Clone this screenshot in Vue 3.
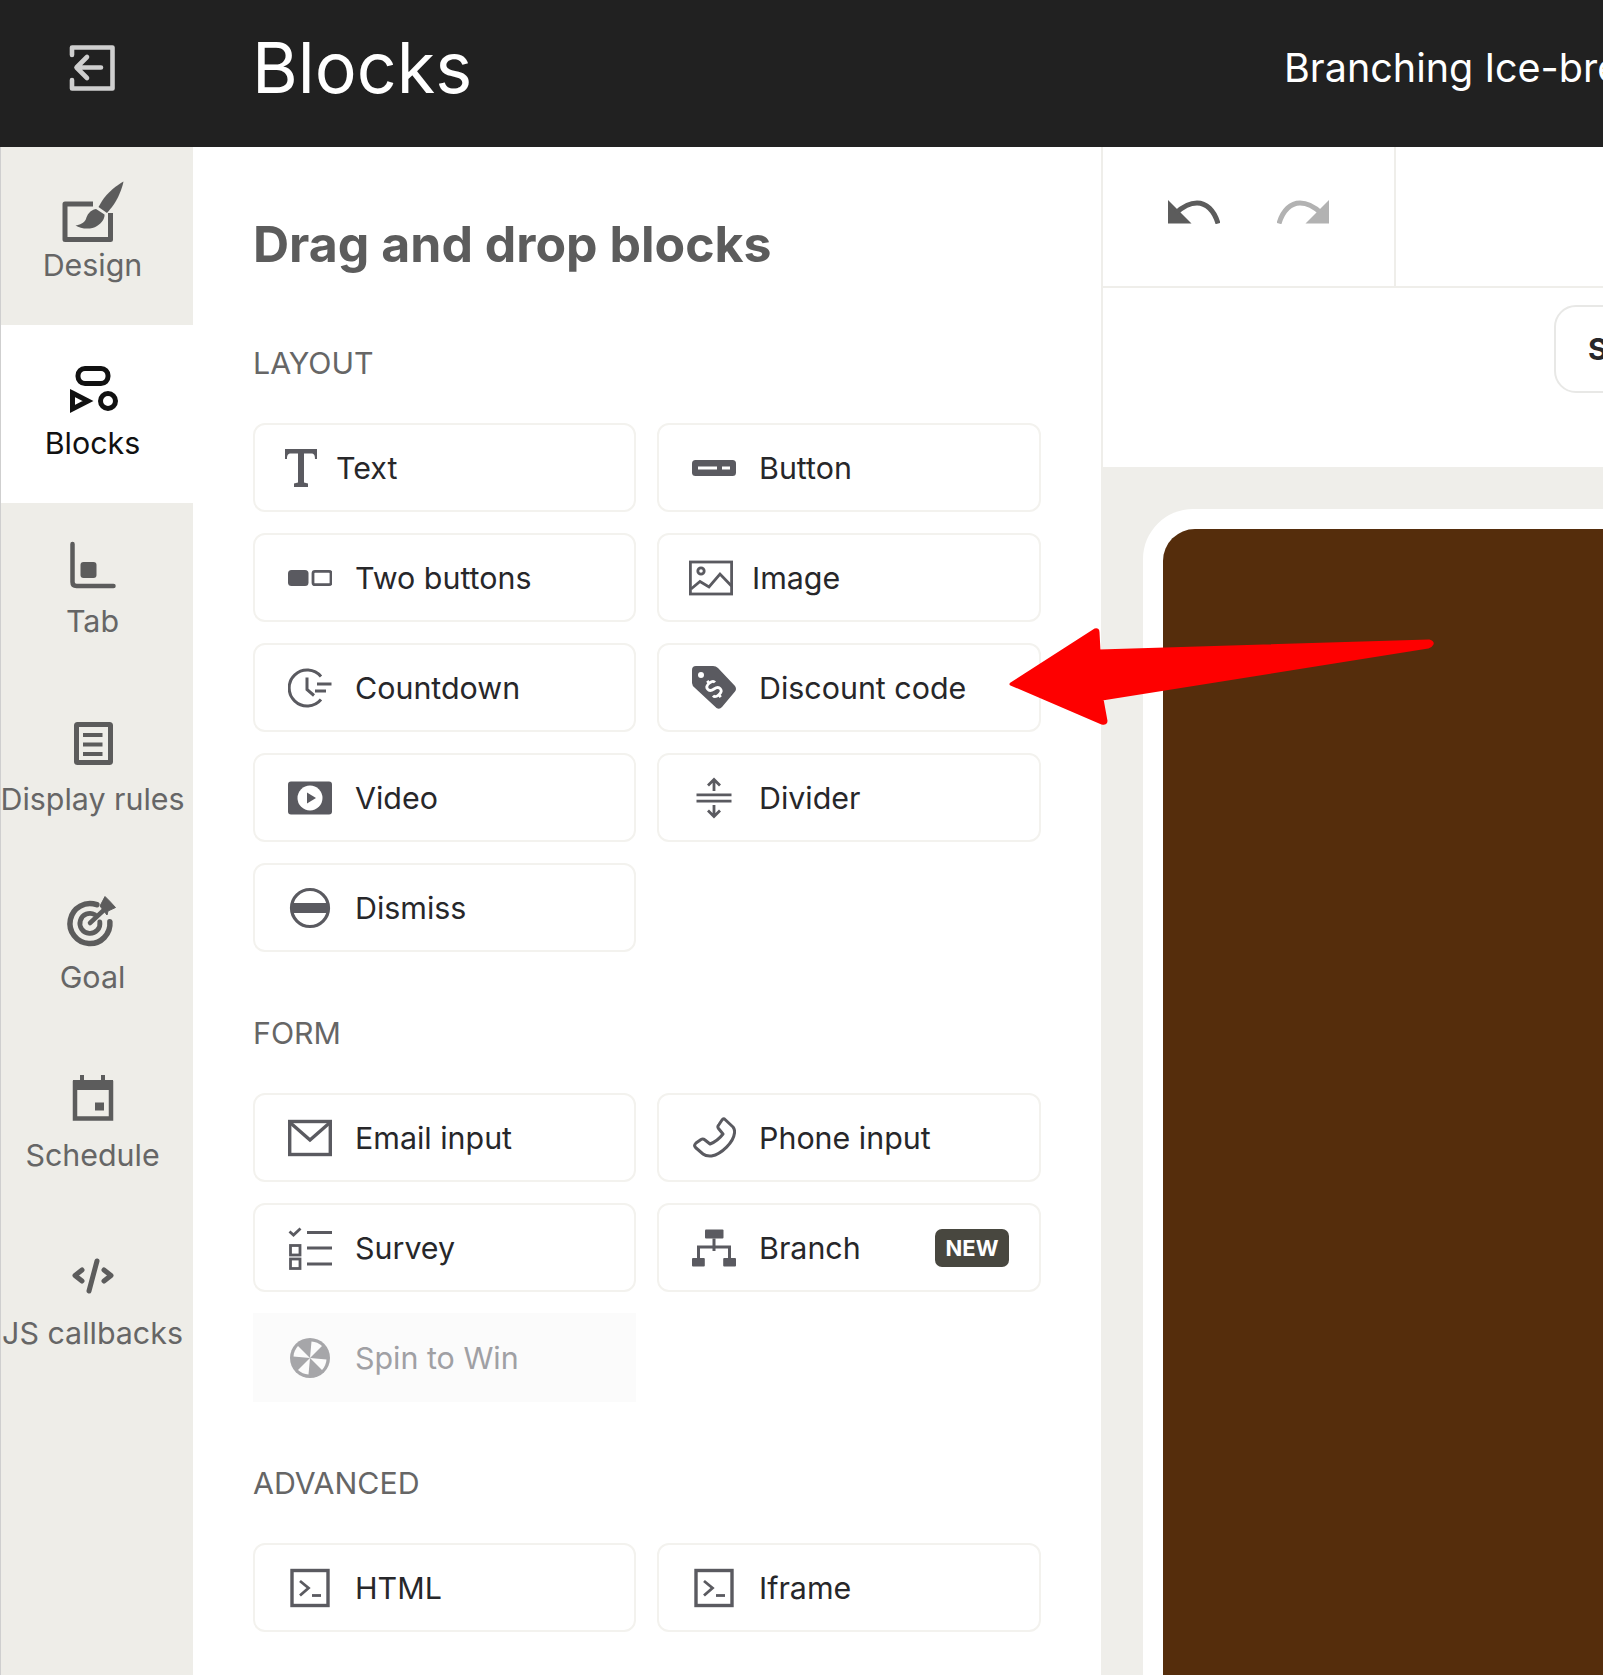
<template>
  <div class="page">
    <header class="topbar">
      <div class="topbar-left">
        <svg class="exit" viewBox="0 0 46 46" fill="none" stroke="#cfcfcf" stroke-width="4.600" stroke-linecap="round" stroke-linejoin="round">
          <path d="M3 10V2.500H43.500V43.500H3V35" />
          <path d="M32 22.500H8M18 12L7.500 22.500L18 33" />
        </svg>
        <h1>Blocks</h1>
      </div>
      <div class="campaign">Branching Ice-breaker</div>
    </header>

    <div class="body">
      <nav class="sidebar">
        <div v-for="t in tabs" :key="t.label" class="tab" :class="{ active: t.active }">
          <svg viewBox="0 0 64 64" class="tab-icon" v-html="t.icon"></svg>
          <span>{{ t.label }}</span>
        </div>
      </nav>

      <aside class="panel">
        <h2>Drag and drop blocks</h2>
        <section v-for="s in sections" :key="s.title">
          <h3>{{ s.title }}</h3>
          <div class="grid">
            <div
              v-for="b in s.blocks"
              :key="b.label"
              class="card"
              :class="[b.cls, { disabled: b.disabled }]"
            >
              <svg class="icon" viewBox="0 0 44 44" v-html="icons[b.icon]"></svg>
              <span>{{ b.label }}</span>
              <em v-if="b.badge" class="badge">{{ b.badge }}</em>
            </div>
          </div>
        </section>
      </aside>

      <main class="editor">
        <div class="toolbar">
          <div class="history">
            <svg class="hist" viewBox="0 0 52 24" fill="#5c5c5c">
              <path d="M0 0V23.500H23.500Z" />
              <path d="M8 13C15 6.500 23 3 29 3C38 3 46 10 50 23.500" fill="none" stroke="#5c5c5c" stroke-width="5" />
            </svg>
            <svg class="hist redo" viewBox="0 0 52 24" fill="#b2b2b2">
              <path d="M52 0V23.500H28.500Z" />
              <path d="M44 13C37 6.500 29 3 23 3C14 3 6 10 2 23.500" fill="none" stroke="#b2b2b2" stroke-width="5" />
            </svg>
          </div>
        </div>
        <div class="subbar">
          <div class="pill">S</div>
        </div>
        <div class="canvas">
          <div class="frame">
            <div class="preview"></div>
          </div>
        </div>
      </main>
    </div>

    <!-- annotation arrow pasted over the screenshot -->
    <svg class="arrow" viewBox="0 0 440 110" width="440" height="110">
      <path
        d="M4 64L88 10Q91 9 91 12L92 31L422 21Q426 22 425 24Q424 26 421 27L95 79L99 101Q99 104 95 103Z"
        fill="#fe0000"
        stroke="#fe0000"
        stroke-width="3"
        stroke-linejoin="round"
      />
    </svg>
  </div>
</template>

<script setup>
const dk = '#5a5a60'

const icons = {
  text: `<path fill="${dk}" d="M6 3H38V13H36C36 9 35 7.500 32 7.500H25V36.500L29 37.500V41H15V37.500L19 36.500V7.500H12C9 7.500 8 9 8 13H6Z"/>`,
  button: `<rect y="14" width="44" height="16" rx="3.500" fill="${dk}"/><path d="M6 22H25M30 22H38" stroke="#fff" stroke-width="3"/>`,
  two: `<rect y="14" width="20.500" height="16" rx="3.500" fill="${dk}"/><rect x="25" y="15.300" width="18" height="13.400" rx="2" fill="none" stroke="${dk}" stroke-width="2.800"/>`,
  countdown: `<g fill="none" stroke="${dk}" stroke-width="3"><path d="M33 10.500A18 18 0 1 0 33 33.500"/><path d="M19 11.500V23.500L26 29.500"/><path d="M29 18H43.500M27 25H38"/></g>`,
  video: `<rect y="5.500" width="44" height="33" rx="3" fill="${dk}"/><circle cx="22" cy="22" r="12.500" fill="#fff"/><path d="M19 16.500L28 22L19 27.500Z" fill="${dk}"/>`,
  dismiss: `<circle cx="22" cy="22" r="18.500" fill="none" stroke="${dk}" stroke-width="3.200"/><rect x="3" y="17" width="38" height="10" fill="${dk}"/>`,
  image: `<g fill="none" stroke="${dk}" stroke-width="2.800"><rect x="1.400" y="6" width="41.200" height="32"/><circle cx="12" cy="15" r="3.200"/><path d="M2 33L11 25.500L20 31L31 18L42.500 30"/></g>`,
  discount: `<path fill="${dk}" d="M4 0H21Q24 0 26 2L43 20Q45 23 43 25.500L30 41Q27.500 44 24.500 42L3 22Q0 19.500 0 17V4Q0 0 4 0Z"/><circle cx="9" cy="9" r="3" fill="#fff"/><g transform="rotate(-40 22 23)" fill="none" stroke="#fff" stroke-width="2.800"><path d="M27 18.500Q27 15.500 22 15.500Q17 15.500 17 19Q17 22.500 22 23Q27 23.500 27 27Q27 30.500 22 30.500Q17 30.500 17 27.500"/><path d="M22 12.500V15.500M22 30.500V33.500"/></g>`,
  divider: `<g fill="none" stroke="${dk}" stroke-width="2.800"><path d="M4.500 18.800H39.500M4.500 25.200H39.500"/><path d="M22 3.500V15M16 9.500L22 3.500L28 9.500"/><path d="M22 29V40.500M16 34.500L22 40.500L28 34.500"/></g>`,
  email: `<g fill="none" stroke="${dk}" stroke-width="3.400"><rect x="1.700" y="5.500" width="40.600" height="33"/><path d="M2 6.500L22 24L42 6.500"/></g>`,
  survey: `<g fill="none" stroke="${dk}" stroke-width="2.800"><path d="M1.500 5.500L5.500 9L12.500 2.500"/><rect x="2.500" y="19.500" width="9.500" height="9.500"/><rect x="2.500" y="33" width="9.500" height="9.500"/><path d="M19 6.500H44M19 22H44M19 38H44"/></g>`,
  phone: `<path fill="none" stroke="${dk}" stroke-width="3" stroke-linejoin="round" d="M32.500 3L41 11Q43 13.500 42.500 17C41.500 26 30 38 19.500 40Q14 40.500 11 38L3.500 31.500Q1.500 29.500 4 27L9 23.500Q11 22.500 13 24L18 28C23 26 28 22 31 18L26.500 12.500Q25 10.500 27 8.500L30 4Q31 2.500 32.500 3Z"/>`,
  branch: `<g fill="${dk}"><rect x="13" y="3.500" width="18.500" height="9" rx="1"/><rect y="32" width="12.800" height="8.500" rx="1"/><rect x="31.200" y="32" width="12.800" height="8.500" rx="1"/></g><path fill="none" stroke="${dk}" stroke-width="3" d="M22 12.500V25M6.500 32V21H37.500V32"/>`,
  spin: `<circle cx="22" cy="22" r="20" fill="#a6a6a9"/><g fill="#fbfbfb"><path d="M22 22L23.500 5.500A17 17 0 0 1 34 10Z"/><path d="M22 22L23.500 5.500A17 17 0 0 1 34 10Z" transform="rotate(90 22 22)"/><path d="M22 22L23.500 5.500A17 17 0 0 1 34 10Z" transform="rotate(180 22 22)"/><path d="M22 22L23.500 5.500A17 17 0 0 1 34 10Z" transform="rotate(270 22 22)"/></g>`,
  terminal: `<g fill="none" stroke="${dk}" stroke-width="3.400"><rect x="4" y="4.500" width="36" height="35"/></g><g fill="none" stroke="${dk}" stroke-width="2.800"><path d="M12 15L20.500 22L12 29.500"/><path d="M24 29.500H33"/></g>`
}

const sections = [
  {
    title: 'LAYOUT',
    blocks: [
      { label: 'Text', icon: 'text', cls: 'tight' },
      { label: 'Button', icon: 'button' },
      { label: 'Two buttons', icon: 'two' },
      { label: 'Image', icon: 'image', cls: 'snug' },
      { label: 'Countdown', icon: 'countdown' },
      { label: 'Discount code', icon: 'discount' },
      { label: 'Video', icon: 'video' },
      { label: 'Divider', icon: 'divider' },
      { label: 'Dismiss', icon: 'dismiss' }
    ]
  },
  {
    title: 'FORM',
    blocks: [
      { label: 'Email input', icon: 'email' },
      { label: 'Phone input', icon: 'phone' },
      { label: 'Survey', icon: 'survey' },
      { label: 'Branch', icon: 'branch', badge: 'NEW' },
      { label: 'Spin to Win', icon: 'spin', disabled: true }
    ]
  },
  {
    title: 'ADVANCED',
    blocks: [
      { label: 'HTML', icon: 'terminal' },
      { label: 'Iframe', icon: 'terminal' }
    ]
  }
]

const gr = '#5c5c5c'
const tabs = [
  {
    label: 'Design',
    icon: `<g fill="${gr}"><path d="M62.500 4.500C56 8 46 16 41 24L37.500 30L46 36L51 30C57 22 61 12 62.500 4.500Z"/><path d="M35 32C29 33 26 38 25 42C23 46 19 48 14.500 48.500C20 52 30 53 36 49C41 46 44 41 43.500 37.500Z"/></g><path d="M32 27H4V62.500H49.500V36" fill="none" stroke="${gr}" stroke-width="5" stroke-linejoin="round"/>`
  },
  {
    label: 'Blocks',
    active: true,
    icon: `<g fill="none" stroke="#111" stroke-width="5"><rect x="17" y="13.500" width="30" height="15" rx="7"/><path d="M11.500 38L27 46L11.500 54Z"/><circle cx="47" cy="46" r="7.500"/></g>`
  },
  {
    label: 'Tab',
    icon: `<path d="M11.500 11V49Q11.500 53 15.500 53H52.500" fill="none" stroke="${gr}" stroke-width="4.500" stroke-linecap="round"/><rect x="19.500" y="29" width="16" height="16" rx="3" fill="${gr}"/>`
  },
  {
    label: 'Display rules',
    icon: `<g fill="none" stroke="${gr}"><rect x="15.500" y="13.500" width="34" height="38" rx="1" stroke-width="5"/><path d="M22 24H41.500M22 33.500H41.500M22 43H41.500" stroke-width="3.800"/></g>`
  },
  {
    label: 'Goal',
    icon: `<g fill="none" stroke="${gr}" stroke-linecap="round"><path d="M35.800 15.700A20 20 0 1 0 48.900 32.800" stroke-width="5.500"/><path d="M34 25.800A10 10 0 1 0 38.800 32.800" stroke-width="4.800"/><path d="M29 34L44 20" stroke-width="4.500"/></g><path d="M39 17L44 7.500L48.500 12L54.500 18.500L47 22L46 26Z" fill="${gr}" stroke="${gr}" stroke-linejoin="round"/>`
  },
  {
    label: 'Schedule',
    icon: `<path d="M14 16H50V51.500H14Z" fill="none" stroke="${gr}" stroke-width="4.500"/><path d="M12 13H19V8H23V13H40V8H44V13H52V23H12Z" fill="${gr}"/><rect x="34" y="35.500" width="9" height="8" fill="${gr}"/>`
  },
  {
    label: 'JS callbacks',
    icon: `<g fill="none" stroke="${gr}" stroke-width="5" stroke-linecap="round" stroke-linejoin="round"><path d="M21 25L14 30.500L21 36"/><path d="M43 25L50 30.500L43 36"/><path d="M36 16L28 46"/></g>`
  }
]
</script>

<style>
html,
body {
  margin: 0;
  background: #fff;
}
</style>

<style scoped>
.page {
  position: relative;
  width: 1603px;
  height: 1675px;
  overflow: hidden;
  display: flex;
  flex-direction: column;
  font-family: Inter, "Liberation Sans", sans-serif;
  background: #fff;
}
.topbar {
  height: 147px;
  flex: none;
  box-sizing: border-box;
  padding-bottom: 11px;
  display: flex;
  align-items: center;
  background: #212121;
  color: #fff;
}
.topbar-left {
  width: 1284px;
  flex: none;
  display: flex;
  align-items: center;
  padding-left: 69px;
  box-sizing: border-box;
}
.exit {
  width: 46px;
  height: 46px;
  margin-right: 137px;
}
h1 {
  margin: 0;
  font-size: 70px;
  font-weight: 400;
  line-height: 80px;
}
.campaign {
  font-size: 39.500px;
  white-space: nowrap;
}
.body {
  flex: 1;
  display: flex;
  min-height: 0;
}
.sidebar {
  width: 193px;
  flex: none;
  box-sizing: border-box;
  border-left: 1px solid #cfcfcf;
  background: #eeede8;
}
.tab {
  height: 178px;
  box-sizing: border-box;
  padding: 30px 9px 0 0;
  display: flex;
  flex-direction: column;
  align-items: center;
  gap: 6px;
  color: #666;
  font-size: 30.400px;
  line-height: 36px;
  white-space: nowrap;
}
.tab.active {
  background: #fff;
  color: #111;
}
.tab-icon {
  width: 64px;
  height: 64px;
  overflow: visible;
}
.panel {
  width: 910px;
  flex: none;
  box-sizing: border-box;
  padding: 68px 0 0 60px;
  border-right: 2px solid #efeeea;
}
h2 {
  margin: 0;
  font-size: 50px;
  line-height: 59px;
  font-weight: 700;
  color: #5c5c5c;
}
h3 {
  margin: 63px 0 42px;
  font-size: 30.300px;
  line-height: 36px;
  font-weight: 400;
  color: #666;
}
section:first-of-type h3 {
  margin-top: 71px;
}
.grid {
  display: grid;
  grid-template-columns: 383px 384px;
  grid-auto-rows: 89px;
  gap: 21px;
}
.card {
  display: flex;
  align-items: center;
  box-sizing: border-box;
  padding-left: 33px;
  gap: 23px;
  border: 2px solid #f3f2ee;
  border-radius: 12px;
  font-size: 30.400px;
  color: #27272a;
}
.card.tight {
  padding-left: 24px;
  gap: 13px;
}
.card.snug {
  padding-left: 30px;
  gap: 19px;
}
.card.disabled {
  background: #fbfbfb;
  border-color: #fbfbfb;
  border-radius: 0;
  color: #a0a0a4;
}
.icon {
  width: 44px;
  height: 44px;
  flex: none;
}
.badge {
  margin-left: auto;
  margin-right: 30px;
  width: 74px;
  height: 38px;
  border-radius: 7px;
  background: #48473f;
  color: #fff;
  font-style: normal;
  font-size: 22px;
  font-weight: 700;
  line-height: 38px;
  text-align: center;
}
.editor {
  flex: 1;
  min-width: 0;
  display: flex;
  flex-direction: column;
}
.toolbar {
  height: 141px;
  flex: none;
  box-sizing: border-box;
  border-bottom: 2px solid #efeeea;
}
.history {
  width: 293px;
  height: 100%;
  box-sizing: border-box;
  padding: 53px 0 0 65px;
  border-right: 2px solid #efeeea;
  display: flex;
  align-items: flex-start;
  gap: 57px;
}
.hist {
  width: 52px;
  height: 24px;
  flex: none;
}
.subbar {
  height: 179px;
  flex: none;
  box-sizing: border-box;
  padding: 17px 0 0 451px;
}
.pill {
  width: 200px;
  height: 88px;
  box-sizing: border-box;
  padding-left: 32px;
  border: 2px solid #e8e8e6;
  border-radius: 22px;
  font-size: 30px;
  font-weight: 700;
  line-height: 84px;
  color: #27272a;
}
.canvas {
  flex: 1;
  min-height: 0;
  padding: 42px 0 0 40px;
  background: #efeeea;
  overflow: hidden;
}
.frame {
  width: 700px;
  height: 1300px;
  box-sizing: border-box;
  padding: 20px;
  border-radius: 50px;
  background: #fff;
}
.preview {
  height: 100%;
  border-radius: 32px;
  background: #552d0c;
}
.arrow {
  position: absolute;
  left: 1007px;
  top: 620px;
}
</style>
